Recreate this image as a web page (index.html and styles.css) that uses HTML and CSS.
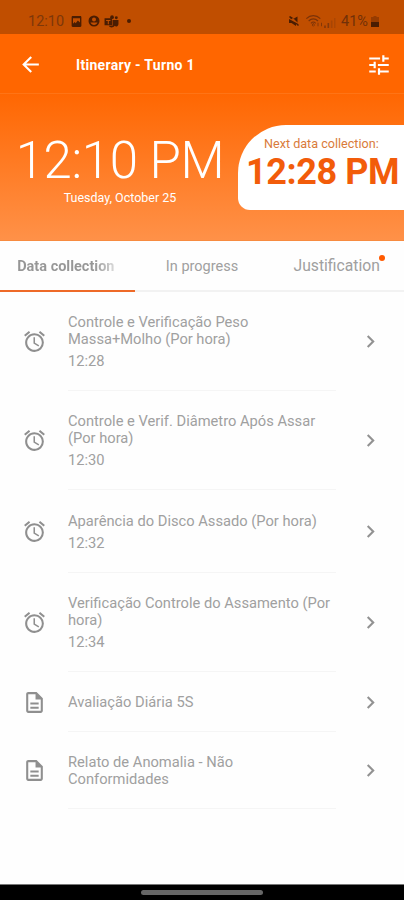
FILE: index.html
```html
<!DOCTYPE html>
<html lang="en">
<head>
<meta charset="utf-8">
<title>Itinerary</title>
<link rel="stylesheet" href="styles.css">
</head>
<body>
<svg width="0" height="0" class="defs">
  <symbol id="alarm" viewBox="0 0 24 24"><path d="M22 5.72l-4.6-3.86-1.29 1.53 4.6 3.86L22 5.72zM7.88 3.39L6.6 1.86 2 5.71l1.29 1.53 4.59-3.85zM12.5 8H11v6l4.75 2.85.75-1.23-4-2.37V8zM12 4c-4.97 0-9 4.03-9 9s4.02 9 9 9a9 9 0 0 0 0-18zm0 16c-3.87 0-7-3.13-7-7s3.13-7 7-7 7 3.13 7 7-3.13 7-7 7z"/></symbol>
  <symbol id="doc" viewBox="0 0 24 24"><path d="M8 16h8v2H8zm0-4h8v2H8zm6-10H6c-1.1 0-2 .9-2 2v16c0 1.1.89 2 1.99 2H18c1.1 0 2-.9 2-2V8l-6-6zm4 18H6V4h7v5h5v11z"/></symbol>
  <symbol id="chev" viewBox="0 0 24 24"><path d="M10 6L8.59 7.41 13.17 12l-4.58 4.59L10 18l6-6z"/></symbol>
</svg>
<div class="status">
  <span class="status-time">12:10</span>
  <svg class="s-image" viewBox="0 0 24 24"><path d="M21 20V4c0-1.100-.9-2-2-2H5c-1.100 0-2 .9-2 2v16c0 1.100.9 2 2 2h14c1.100 0 2-.9 2-2zM5.500 6h13v8l-4-4-4 5-2-2-3 3z" fill-rule="evenodd"/></svg>
  <svg class="s-person" viewBox="0 0 24 24"><path fill-rule="evenodd" d="M12 1a11 11 0 1 0 0 22 11 11 0 0 0 0-22zM12 5a4 4 0 1 1 0 8 4 4 0 0 1 0-8zM5 15h14c-1 3-4 5-7 5s-6-2-7-5z"/></svg>
  <svg class="s-teams" viewBox="0 0 28 24"><path fill-rule="evenodd" d="M1 6h14v13H1zM4 9v2h3v6h2v-6h3V9zM16 9h11v7c0 4-3 6-6 5l-1-1c-3 4-9 4-11 0h7z"/><circle cx="15" cy="4" r="3.500"/><circle cx="23" cy="5" r="2.700"/></svg>
  <i class="s-dot"></i>
  <span class="grow"></span>
  <svg class="s-mute" viewBox="0 0 24 24"><path d="M2 8h5l3-2 9 9V3l-7 4-8-5-2 2 18 18 2-2-3-3M2 8v8h5l9 6v-4L6 8z"/></svg>
  <svg class="s-wifi" viewBox="0 0 32 24" fill="none" stroke="currentColor" stroke-width="2"><path d="M2 8C9 1 19 1 26 8M6 12c5-5 11-5 16 0M10 16c3-3 5-3 8 0"/><path d="M14 16l2 3-2 2-2-2zM22 21v-6M28 15v6" stroke-width="1.500"/></svg>
  <svg class="s-signal" viewBox="0 0 14 12"><path d="M0 9h2v3H0zM4 6h2v6H4z"/><path d="M8 3h2v9H8zM12 0h1.500v12H12z" opacity=".4"/></svg>
  <span class="status-batt">41%</span>
  <svg class="s-batt" viewBox="0 0 8 11"><path d="M2.500 0h3v1H8v5H0V1h2.500z" opacity=".35"/><path d="M0 6h8v5H0z"/></svg>
</div>
<header class="bar">
  <svg class="back" viewBox="0 0 24 24"><path d="M20 11H7.830l5.590-5.590L12 4l-8 8 8 8 1.410-1.410L7.830 13H20v-2z"/></svg>
  <h1>Itinerary - Turno 1</h1>
  <svg class="tune" viewBox="0 0 24 24"><path d="M3 17v2h6v-2H3zM3 5v2h10V5H3zm10 16v-2h8v-2h-8v-2h-2v6h2zM7 9v2H3v2h4v2h2V9H7zm14 4v-2H11v2h10zm-6-4h2V7h4V5h-4V3h-2v6z"/></svg>
</header>
<section class="hero">
  <div class="now"><div class="clock">12:10 PM</div><div class="date">Tuesday, October 25</div></div>
  <div class="next"><div class="next-label">Next data collection:</div><div class="next-time">12:28 PM</div></div>
</section>
<nav class="tabs">
  <div class="tab active"><span class="fade">Data collection</span></div>
  <div class="tab"><span>In progress</span></div>
  <div class="tab just"><span>Justification<i class="badge"></i></span></div>
</nav>
<main>
  <div class="row tall"><svg class="ic"><use href="#alarm"/></svg><div class="txt"><p>Controle e Verificação Peso<br>Massa+Molho (Por hora)</p><p class="time">12:28</p></div><svg class="chev"><use href="#chev"/></svg></div>
  <div class="row tall"><svg class="ic"><use href="#alarm"/></svg><div class="txt"><p>Controle e Verif. Diâmetro Após Assar<br>(Por hora)</p><p class="time">12:30</p></div><svg class="chev"><use href="#chev"/></svg></div>
  <div class="row mid"><svg class="ic"><use href="#alarm"/></svg><div class="txt"><p>Aparência do Disco Assado (Por hora)</p><p class="time">12:32</p></div><svg class="chev"><use href="#chev"/></svg></div>
  <div class="row tall"><svg class="ic"><use href="#alarm"/></svg><div class="txt"><p>Verificação Controle do Assamento (Por<br>hora)</p><p class="time">12:34</p></div><svg class="chev"><use href="#chev"/></svg></div>
  <div class="row short"><svg class="ic"><use href="#doc"/></svg><div class="txt"><p>Avaliação Diária 5S</p></div><svg class="chev"><use href="#chev"/></svg></div>
  <div class="row last"><svg class="ic"><use href="#doc"/></svg><div class="txt"><p>Relato de Anomalia - Não<br>Conformidades</p></div><svg class="chev"><use href="#chev"/></svg></div>
</main>
<footer><i></i></footer>
</body>
</html>
```
FILE: styles.css
```css
* { box-sizing: border-box; margin: 0; padding: 0; }
body { width: 404px; height: 900px; display: flex; flex-direction: column; overflow: hidden; background: #fefefe; font-family: Roboto, sans-serif; color: #a0a0a0; }
svg { fill: currentColor; flex: none; }
.defs { display: none; }
.grow { flex: 1; }

.status { height: 34px; flex: none; background: #c04e00; color: #4a1d02; display: flex; align-items: center; padding: 8px 25px 0 28px; }
.status-time { font-size: 14.500px; color: #7d370a; width: 42px; }
.s-image { width: 13px; height: 13px; margin-right: 5px; }
.s-person { width: 12px; height: 12px; margin-right: 4px; }
.s-teams { width: 15px; height: 13px; margin-right: 8px; }
.s-dot { width: 4px; height: 4px; border-radius: 50%; background: #4a1d02; }
.s-mute { width: 12px; height: 12px; margin-right: 5px; }
.s-wifi { width: 19px; height: 14px; color: #7b3308; fill: none; }
.s-signal { width: 12px; height: 10px; margin: 3px 5px 0 0; color: #85390a; }
.status-batt { font-size: 14.500px; color: #713008; width: 28px; }
.s-batt { width: 8px; height: 11px; margin-left: 2px; }

.bar { height: 60px; flex: none; background: #ff6600; color: #fff; display: flex; align-items: center; padding: 2px 12px 0 18px; border-bottom: 1px solid #ff7416; }
.back { width: 25px; height: 25px; }
.bar h1 { flex: 1; margin-left: 33px; font-size: 14px; letter-spacing: .3px; font-weight: 700; white-space: nowrap; }
.tune { width: 26px; height: 26px; }

.hero { height: 147px; flex: none; display: flex; background: linear-gradient(#ff6702, #ff9148); color: #fff; border-bottom: 1px solid #f78b40; }
.now { width: 238px; flex: none; padding: 37px 0 0 2px; text-align: center; }
.clock { font-size: 51px; line-height: 60px; font-weight: 300; letter-spacing: -.4px; white-space: nowrap; }
.date { font-size: 12.500px; line-height: 14px; }
.next { flex: 1; min-width: 0; height: 85px; margin-top: 31px; padding: 11px 0 0 8px; background: #fff; border-radius: 48px 0 0 12px; color: #f25c0a; white-space: nowrap; }
.next-label { padding-left: 18px; font-size: 12.600px; line-height: 15px; color: #d97b3a; }
.next-time { font-size: 36px; line-height: 42px; font-weight: 700; letter-spacing: -.4px; }

.tabs { height: 51px; flex: none; display: flex; border-bottom: 2px solid #f2f2f2; }
.tab { width: 135px; height: 51px; padding-top: 17px; font-size: 14.500px; line-height: 18px; text-align: center; white-space: nowrap; }
.active { border-bottom: 2px solid #ee6a28; font-weight: 700; color: #8e8e8e; padding-right: 3px; }
.fade { background: linear-gradient(90deg, #969696 80%, #d8d8d8); background-clip: text; -webkit-background-clip: text; color: transparent; }
.just { padding-top: 16px; }
.just span { position: relative; font-size: 15.700px; }
.badge { position: absolute; right: -5px; top: -1px; width: 6px; height: 6px; border-radius: 50%; background: #ff5a00; }

.row { display: flex; align-items: center; padding: 0 21px 0 22px; }
.row .txt { width: 268px; margin-left: 21px; padding-top: 2px; height: 100%; display: flex; flex-direction: column; justify-content: center; border-bottom: 1px solid #f5f5f5; white-space: nowrap; }
.tall { height: 99px; }
.mid { height: 83px; }
.short { height: 60px; }
.last { height: 77px; }
.ic { width: 25px; height: 25px; color: #8f8f8f; }
.chev { width: 25px; height: 25px; margin-left: 22px; color: #929292; }
.row p { font-size: 14.700px; line-height: 17px; }
.row .time { margin-top: 5px; }

footer { margin-top: auto; height: 16px; flex: none; background: #000; border-top: 1px solid #777; display: flex; justify-content: center; align-items: center; }
footer i { width: 122px; height: 5px; border-radius: 3px; background: #666; }
```
